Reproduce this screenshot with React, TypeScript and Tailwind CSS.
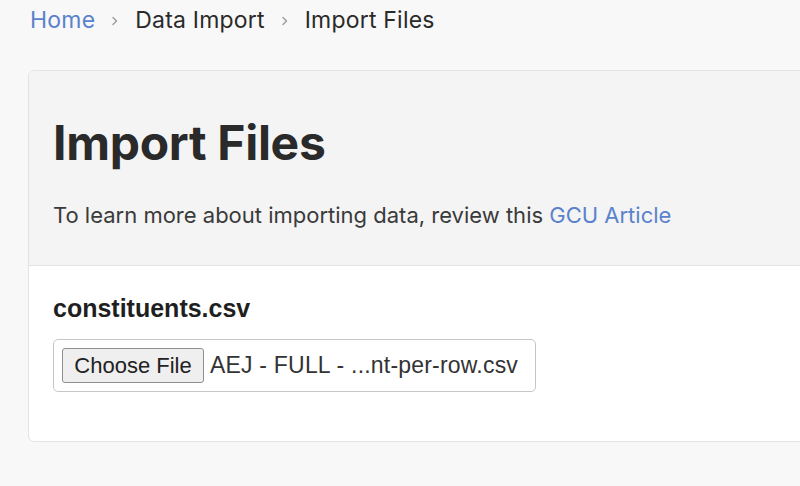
const Chevron = () => (
    <svg width="8" height="12" viewBox="0 0 8 12" className="mx-[16px] mt-[2px]">
        <path d="M2 2.5 L5.5 6 L2 9.5" fill="none" stroke="#9a9a9a" strokeWidth="1.4" strokeLinecap="round" strokeLinejoin="round"/>
    </svg>
);

const App = () => {
    return (
        <div className="h-[486px] w-[800px] overflow-hidden bg-[#f8f8f8] font-['Inter',sans-serif]">
            <nav className="flex items-center pl-[30px] pt-[6px] text-[23px] leading-[28px] tracking-[0.2px] text-[#2a2a2a]">
                <a className="text-[#5b82cc]">Home</a>
                <Chevron/>
                <span>Data Import</span>
                <Chevron/>
                <span>Import Files</span>
            </nav>

            <div className="ml-[28px] mt-[36px] w-[800px] rounded-[6px] border border-[#e3e3e3] bg-white overflow-hidden">
                <div className="bg-[#f4f4f4] border-b border-[#e3e3e3] px-[24px] pt-[48px] pb-[36px]">
                    <h1 className="text-[48px] leading-[48px] font-bold text-[#2a2a2a] tracking-[-0.3px]">Import Files</h1>
                    <p className="mt-[34px] text-[22px] leading-[28px] text-[#3a3a3a]">
                        To learn more about importing data, review this <a className="text-[#5b82cc]">GCU Article</a>
                    </p>
                </div>
                <div className="px-[24px] pt-[28px] pb-[49px]">
                    <h2 className="text-[25px] leading-[28px] font-bold text-[#1f1f1f] font-['Liberation_Sans',sans-serif]">constituents.csv</h2>
                    <div className="mt-[17px] flex items-center w-[483px] h-[53px] rounded-[5px] border border-[#c6c6c6] bg-white pl-[8px] font-['Liberation_Sans',sans-serif]">
                        <button className="h-[35px] w-[142px] rounded-[3px] border border-[#8f8f8f] bg-[#efefef] text-[22px] text-[#222]">Choose File</button>
                        <span className="ml-[6px] text-[23px] tracking-[0.2px] text-[#333]">AEJ - FULL - ...nt-per-row.csv</span>
                    </div>
                </div>
            </div>
        </div>
    );
};

export default App;
